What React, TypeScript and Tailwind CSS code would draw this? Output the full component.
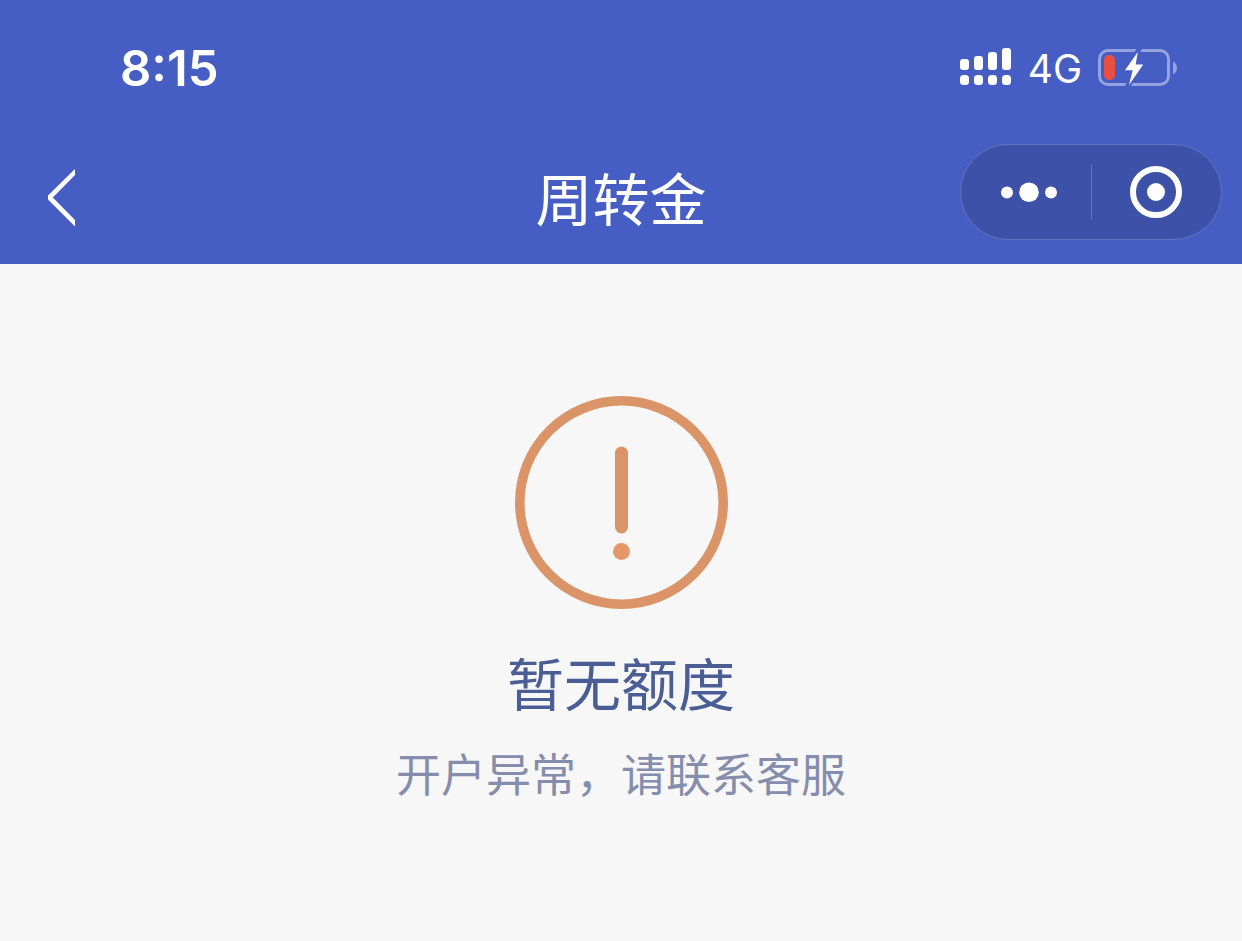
const signalBars = [
  { x: 0, top: 11 },
  { x: 14, top: 8 },
  { x: 28, top: 4 },
  { x: 42, top: 0 },
];

function SignalIcon() {
  return (
    <svg width="52" height="41" viewBox="0 0 52 41" fill="white" aria-hidden="true">
      {signalBars.map((bar) => (
        <g key={bar.x}>
          <rect x={bar.x} y={bar.top} width="9" height={22 - bar.top} rx="3" />
          <rect x={bar.x} y="27" width="9" height="10" rx="3.5" />
        </g>
      ))}
    </svg>
  );
}

function BatteryIcon() {
  return (
    <svg width="80" height="38" viewBox="0 0 80 38" fill="none" aria-hidden="true">
      <rect x="1.5" y="1.5" width="69" height="34" rx="8.5" stroke="#95a3de" strokeWidth="3" />
      <path d="M75 12.5c5.3 2.5 5.3 10.5 0 13z" fill="#95a3de" />
      {/* przerwy w ramce nad i pod błyskawicą */}
      <path d="M38.500 0H44l-3 5h-6zM29 32h6.500l-2.500 5.500h-6z" fill="#465ec4" />
      <rect x="6" y="6" width="11" height="25" rx="5" fill="#ea4f3d" />
      <path d="M39.800 3 27 21.200h7.700L31 36l14.200-20.500h-7.500z" fill="white" />
    </svg>
  );
}

function StatusBar() {
  return (
    <div className="flex h-34 items-center justify-between pl-30 pr-16 font-['Inter',sans-serif]">
      <time className="text-[49px] leading-none font-semibold">8:15</time>
      <div className="flex items-center">
        <SignalIcon />
        <span className="mx-4 text-[39px] leading-none">4G</span>
        <BatteryIcon />
      </div>
    </div>
  );
}

function Capsule() {
  return (
    <div className="flex h-24 w-[262px] items-center rounded-full border border-[#6375bb] bg-[#3c51a7]">
      <button type="button" aria-label="更多" className="flex h-full w-1/2 items-center justify-center pl-1.5">
        <svg width="56" height="20" viewBox="0 0 56 20" fill="white" aria-hidden="true">
          <circle cx="6" cy="10.500" r="6" />
          <circle cx="28" cy="10.200" r="9.800" />
          <circle cx="50" cy="10.500" r="6" />
        </svg>
      </button>
      <span className="h-14 w-px shrink-0 bg-[#6375bb]" />
      <button type="button" aria-label="关闭" className="flex h-full w-1/2 items-center justify-center">
        <svg width="52" height="52" viewBox="0 0 52 52" aria-hidden="true">
          <circle cx="26" cy="26" r="23" fill="none" stroke="white" strokeWidth="6" />
          <circle cx="26" cy="26" r="9" fill="white" />
        </svg>
      </button>
    </div>
  );
}

function NavBar() {
  return (
    <nav className="grid h-32 grid-cols-[1fr_auto_1fr] items-center">
      <button type="button" aria-label="返回" className="justify-self-start pt-4 pr-6 pb-5 pl-12">
        <svg width="27" height="58" viewBox="0 0 27 58" fill="white" aria-hidden="true">
          <path d="M27 0v6L4.800 28.500 27 51v6.500L0 30.500v-4z" />
        </svg>
      </button>
      <h1 className="pb-2 text-[57px] leading-none">周转金</h1>
      <div className="mr-5 mt-2 self-start justify-self-end">
        <Capsule />
      </div>
    </nav>
  );
}

function WarningIcon() {
  return (
    <svg width="213" height="213" viewBox="0 0 213 213" fill="none" aria-hidden="true">
      <circle cx="106.500" cy="106.500" r="101.700" stroke="#db9467" strokeWidth="9.600" />
      <rect x="100" y="50.500" width="13" height="87" rx="6.500" fill="#db9467" />
      <circle cx="106.500" cy="155.500" r="8.500" fill="#e6986b" />
    </svg>
  );
}

export default function App() {
  return (
    <div className="min-h-screen bg-[#f7f7f7] font-['Noto_Sans_CJK_SC',sans-serif]">
      <header className="bg-[#465ec4] text-white">
        <StatusBar />
        <NavBar />
      </header>
      <main className="flex flex-col items-center px-6 pt-33 text-center">
        <WarningIcon />
        <h2 className="mt-8 text-[57px] leading-[80px] text-[#4a5d94]">暂无额度</h2>
        <p className="mt-5 text-[45px] leading-[64px] text-[#858dad]">开户异常，请联系客服</p>
      </main>
    </div>
  );
}
